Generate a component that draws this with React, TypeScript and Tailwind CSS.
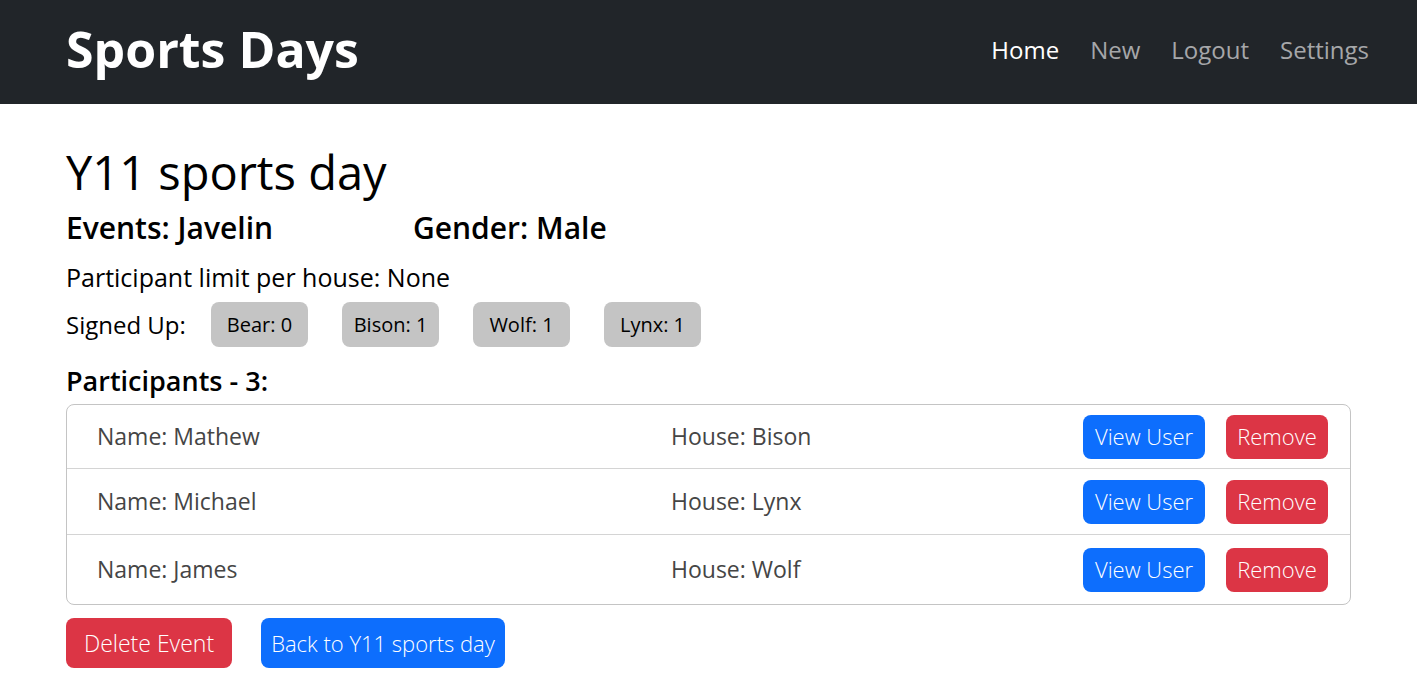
import React from "react";

const font = { fontFamily: '"Open Sans", "Noto Sans", sans-serif' };

const participants = [
  { name: "Mathew", house: "Bison", h: "h-[64px]" },
  { name: "Michael", house: "Lynx", h: "h-[66px]" },
  { name: "James", house: "Wolf", h: "h-[69px]" },
];

const houses = ["Bear: 0", "Bison: 1", "Wolf: 1", "Lynx: 1"];

export default function App() {
  return (
    <div className="min-h-[692px] bg-white text-black" style={font}>
      <nav className="h-[104px] bg-[#212529] flex items-center justify-between pl-[66px] pr-[48px]">
        <div className="text-white font-bold text-[50px] leading-none pb-[6px]">Sports Days</div>
        <div className="flex items-center gap-[31px] text-[24px] pb-[4px]">
          <span className="text-white">Home</span>
          <span className="text-[#a6a7a9]">New</span>
          <span className="text-[#a6a7a9]">Logout</span>
          <span className="text-[#a6a7a9]">Settings</span>
        </div>
      </nav>
      <main className="pl-[66px] pr-[66px] pt-[38px]">
        <h1 className="text-[47px] font-medium leading-[60px]">Y11 sports day</h1>
        <div className="flex mt-[6px] text-[30px] font-semibold leading-[40px]">
          <span className="w-[347px]">Events: Javelin</span>
          <span>Gender: Male</span>
        </div>
        <div className="text-[25px] mt-[13px] leading-[32px]">Participant limit per house: None</div>
        <div className="flex items-center mt-[9px]">
          <span className="text-[24px] w-[145px]">Signed Up:</span>
          <div className="flex gap-[34px]">
            {houses.map((h) => (
              <span
                key={h}
                className="w-[97px] h-[45px] rounded-[8px] bg-[#c4c4c4] flex items-center justify-center text-[20px]"
              >
                {h}
              </span>
            ))}
          </div>
        </div>
        <h3 className="text-[27px] font-semibold mt-[18px] leading-[32px]">Participants - 3:</h3>
        <div className="mt-[7px] border border-[#c4c4c4] rounded-[8px]">
          {participants.map((p, i) => (
            <div
              key={p.name}
              className={
                p.h +
                " flex items-center text-[23px] text-[#454545] " +
                (i < 2 ? "border-b border-[#d4d4d4]" : "")
              }
            >
              <span className="pl-[30px] w-[604px]">Name: {p.name}</span>
              <span className="flex-1">House: {p.house}</span>
              <div className="flex gap-[21px] pr-[22px]">
                <button className="w-[122px] h-[44px] rounded-[8px] bg-[#0d6efd] text-white text-[22px] font-light">
                  View User
                </button>
                <button className="w-[102px] h-[44px] rounded-[8px] bg-[#dc3545] text-white text-[22px] font-light">
                  Remove
                </button>
              </div>
            </div>
          ))}
        </div>
        <div className="flex gap-[29px] mt-[13px]">
          <button className="w-[166px] h-[50px] rounded-[8px] bg-[#dc3545] text-white text-[23px] font-light">
            Delete Event
          </button>
          <button className="w-[244px] h-[50px] rounded-[8px] bg-[#0d6efd] text-white text-[22px] font-light">
            Back to Y11 sports day
          </button>
        </div>
      </main>
    </div>
  );
}
